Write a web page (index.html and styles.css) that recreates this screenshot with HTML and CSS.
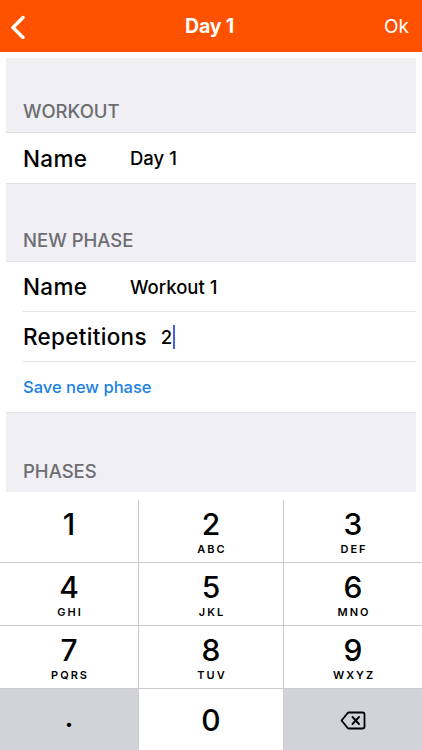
FILE: index.html
```html
<!DOCTYPE html>
<html>
<head>
<meta charset="utf-8">
<link rel="stylesheet" href="styles.css">
</head>
<body>
<div class="screen">
  <header class="navbar">
    <div class="nav-left">
      <svg class="chevron" width="16" height="24" viewBox="0 0 16 24"><polyline points="13,2.5 3,12.5 13,22.5" fill="none" stroke="#fff" stroke-width="3.4" stroke-linecap="round" stroke-linejoin="round"/></svg>
    </div>
    <div class="nav-title">Day 1</div>
    <div class="nav-right">Ok</div>
  </header>

  <main class="content">
    <div class="section-header first">WORKOUT</div>
    <div class="group">
      <div class="row"><div class="row-inner last"><span class="label">Name</span><span class="value">Day 1</span></div></div>
    </div>

    <div class="section-header">NEW PHASE</div>
    <div class="group">
      <div class="row"><div class="row-inner"><span class="label">Name</span><span class="value">Workout 1</span></div></div>
      <div class="row"><div class="row-inner"><span class="label">Repetitions</span><span class="value">2</span><span class="cursor"></span></div></div>
      <div class="row"><div class="row-inner last"><span class="link">Save new phase</span></div></div>
    </div>

    <div class="section-header last-header">PHASES</div>
  </main>

  <section class="keyboard">
    <div class="keys">
      <div class="key"><span class="digit">1</span><span class="letters">&nbsp;</span></div>
      <div class="key"><span class="digit">2</span><span class="letters">ABC</span></div>
      <div class="key"><span class="digit">3</span><span class="letters">DEF</span></div>
      <div class="key"><span class="digit">4</span><span class="letters">GHI</span></div>
      <div class="key"><span class="digit">5</span><span class="letters">JKL</span></div>
      <div class="key"><span class="digit">6</span><span class="letters">MNO</span></div>
      <div class="key"><span class="digit">7</span><span class="letters">PQRS</span></div>
      <div class="key"><span class="digit">8</span><span class="letters">TUV</span></div>
      <div class="key"><span class="digit">9</span><span class="letters">WXYZ</span></div>
      <div class="key key-dark key-center"><span class="dot">.</span></div>
      <div class="key key-center"><span class="digit zero">0</span></div>
      <div class="key key-dark key-center">
        <svg class="backspace" width="26" height="19" viewBox="0 0 26 19"><path d="M9 1.5 H22.5 a2 2 0 0 1 2 2 V15.5 a2 2 0 0 1 -2 2 H9 a2 2 0 0 1 -1.5 -0.7 L1.6 9.5 L7.5 2.2 A2 2 0 0 1 9 1.5 Z" fill="none" stroke="#000" stroke-width="1.8" stroke-linejoin="round"/><path d="M12.5 6 L19 13 M19 6 L12.5 13" stroke="#000" stroke-width="1.9" stroke-linecap="round"/></svg>
      </div>
    </div>
  </section>
</div>
</body>
</html>
```

FILE: styles.css
```css
* { box-sizing: border-box; }
html, body { margin: 0; padding: 0; }
body {
  width: 422px;
  height: 750px;
  overflow: hidden;
  background: #ffffff;
  font-family: Inter, "Liberation Sans", sans-serif;
  color: #000;
}
.screen {
  display: flex;
  flex-direction: column;
  height: 750px;
}
.navbar {
  height: 52px;
  flex: none;
  background: #ff5200;
  display: grid;
  grid-template-columns: 1fr auto 1fr;
  align-items: center;
  padding: 0 13px 0 10px;
  color: #fff;
}
.nav-left { display: flex; align-items: center; }
.chevron { display: block; margin-top: 2px; }
.nav-title {
  font-size: 19.5px;
  font-weight: 700;
  letter-spacing: -0.2px;
}
.nav-right {
  justify-self: end;
  font-size: 19px;
  font-weight: 400;
}
.content {
  margin: 6px 6px 0;
  background: #efeff4;
  flex: none;
}
.section-header {
  height: 77px;
  display: flex;
  align-items: flex-end;
  padding: 0 0 10px 17px;
  font-size: 18.5px;
  line-height: 22px;
  font-weight: 500;
  color: #6d6d72;
}
.section-header.first { height: 74px; }
.section-header.last-header { height: 79px; }
.group {
  background: #fff;
  border-top: 1px solid #e1e1e6;
  border-bottom: 1px solid #e1e1e6;
}
.row {
  padding-left: 17px;
}
.row-inner {
  height: 50px;
  display: flex;
  align-items: center;
  border-bottom: 1px solid #e4e4e8;
}
.row-inner.last { height: 50px; border-bottom: none; }
.label {
  min-width: 93px;
  margin-right: 14px;
  font-size: 22.5px;
  font-weight: 500;
  letter-spacing: 0.3px;
}
.value {
  font-size: 18.5px;
  font-weight: 500;
}
.cursor {
  width: 2px;
  height: 24px;
  background: #4a5fe0;
  margin-left: 1px;
}
.link {
  font-size: 16.5px;
  font-weight: 500;
  color: #1a82e3;
}
.keyboard {
  flex: 1;
  background: #fff;
  padding-top: 8px;
}
.keys {
  display: grid;
  grid-template-columns: 138px 144px 1fr;
  grid-auto-rows: 62px;
  gap: 1px;
  background: #cbcbcf;
}
.key {
  background: #fff;
  display: flex;
  flex-direction: column;
  align-items: center;
  padding-top: 8px;
}
.key-dark { background: #d1d3d9; }
.key-center { justify-content: center; padding-top: 0; }
.digit {
  font-size: 30px;
  line-height: 32px;
  font-weight: 450;
}
.letters {
  font-size: 11px;
  line-height: 14px;
  font-weight: 600;
  letter-spacing: 2px;
  margin-left: 2px;
  margin-top: 2px;
}
.zero { margin-top: 0; }
.dot {
  font-size: 28px;
  line-height: 20px;
  font-weight: 600;
  margin-top: -6px;
}
.backspace { display: block; }
```
